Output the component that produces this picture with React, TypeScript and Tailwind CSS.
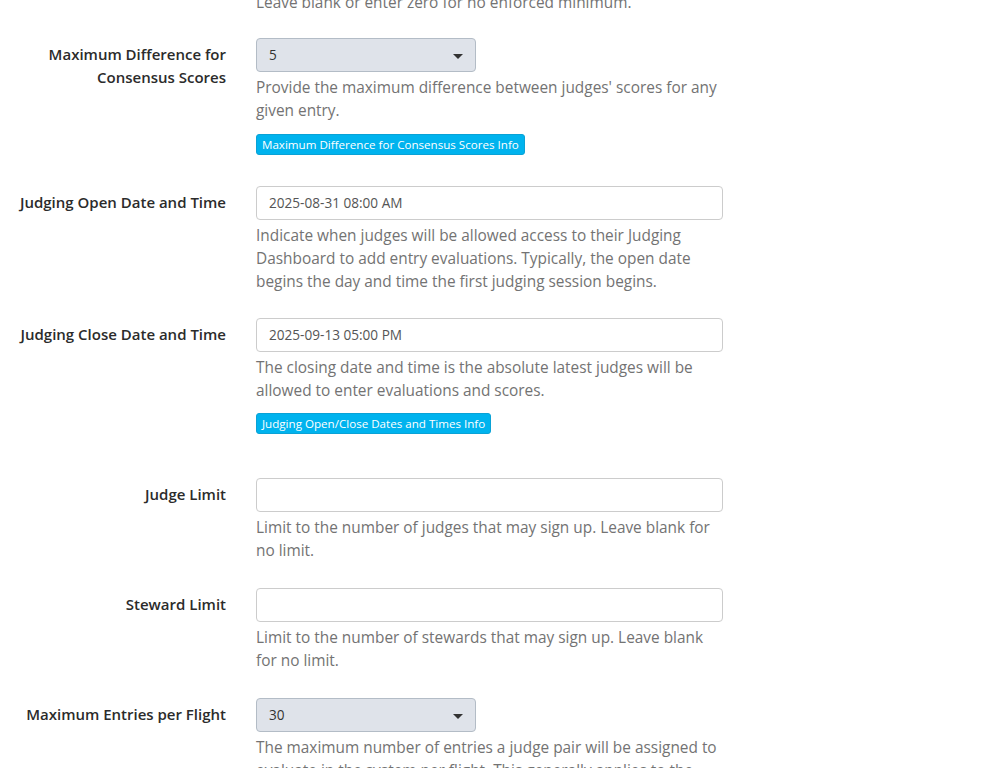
import React from "react";

const font = { fontFamily: '"Open Sans", "Noto Sans", sans-serif' };

function Caret() {
  return (
    <svg width="10" height="5" viewBox="0 0 10 5" className="absolute right-[12px] top-[15px]">
      <path d="M0 0 L10 0 L5 5 Z" fill="#333" />
    </svg>
  );
}

function Select({ value }: { value: string }) {
  return (
    <div className="relative h-[34px] w-[220px] rounded-[4px] border border-[#b3bcc6] bg-[#dfe3ea] px-[12px] text-[13.6px] leading-[32px] text-[#333]">
      {value}
      <Caret />
    </div>
  );
}

function Input({ value }: { value?: string }) {
  return (
    <div className="h-[34px] w-[467px] rounded-[4px] border border-[#cccccc] bg-white px-[12px] text-[13.6px] leading-[32px] text-[#555]">
      {value}
    </div>
  );
}

function Help({ children }: { children: React.ReactNode }) {
  return <p className="mt-[4px] w-[467px] text-[15.4px] leading-[23px] text-[#737373]">{children}</p>;
}

function InfoButton({ children }: { children: React.ReactNode }) {
  return (
    <span className="block rounded-[3px] border border-[#0aa2d6] bg-[#00b3ee] px-[5px] text-[11.6px] leading-[19px] text-white">
      {children}
    </span>
  );
}

function Row({
  label,
  children,
  className = "",
}: {
  label: React.ReactNode;
  children: React.ReactNode;
  className?: string;
}) {
  return (
    <div className={`flex gap-[30px] ${className}`}>
      <label className="w-[226px] shrink-0 pt-[5px] text-right text-[15px] font-semibold leading-[23px] text-[#2b2b2b]">
        {label}
      </label>
      <div className="flex flex-col items-start">{children}</div>
    </div>
  );
}

export default function App() {
  return (
    <div className="h-[768px] w-full overflow-hidden bg-white" style={font}>
      <div className="-mt-[9px]">
        <div className="pl-[256px]">
          <p className="text-[15.4px] leading-[23px] text-[#737373]">Leave blank or enter zero for no enforced minimum.</p>
        </div>

        <Row label={<>Maximum Difference for<br />Consensus Scores</>} className="mt-[24px]">
          <Select value="5" />
          <Help>Provide the maximum difference between judges' scores for any given entry.</Help>
          <div className="mt-[12px] flex">
            <InfoButton>Maximum Difference for Consensus Scores Info</InfoButton>
          </div>
        </Row>

        <Row label="Judging Open Date and Time" className="mt-[31px]">
          <Input value="2025-08-31 08:00 AM" />
          <Help>
            Indicate when judges will be allowed access to their Judging Dashboard to add entry evaluations. Typically, the
            open date begins the day and time the first judging session begins.
          </Help>
        </Row>

        <Row label="Judging Close Date and Time" className="mt-[25px]">
          <Input value="2025-09-13 05:00 PM" />
          <Help>The closing date and time is the absolute latest judges will be allowed to enter evaluations and scores.</Help>
          <div className="mt-[11px] flex">
            <InfoButton>Judging Open/Close Dates and Times Info</InfoButton>
          </div>
        </Row>

        <Row label="Judge Limit" className="mt-[44px]">
          <Input />
          <Help>Limit to the number of judges that may sign up. Leave blank for no limit.</Help>
        </Row>

        <Row label="Steward Limit" className="mt-[26px]">
          <Input />
          <Help>Limit to the number of stewards that may sign up. Leave blank for no limit.</Help>
        </Row>

        <Row label="Maximum Entries per Flight" className="mt-[26px]">
          <Select value="30" />
          <Help>
            The maximum number of entries a judge pair will be assigned to evaluate in the system per flight. This generally
            applies to the
          </Help>
        </Row>
      </div>
    </div>
  );
}
